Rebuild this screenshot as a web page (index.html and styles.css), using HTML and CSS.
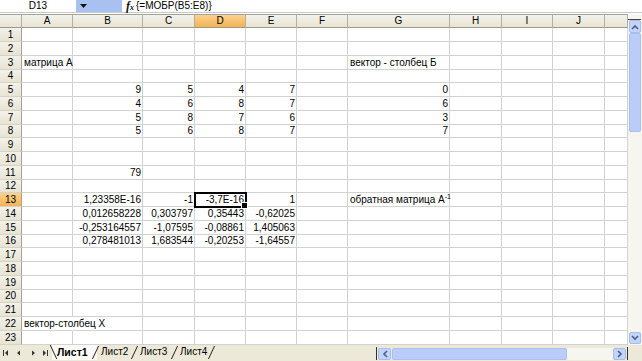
FILE: index.html
```html
<!DOCTYPE html>
<html>
<head>
<meta charset="utf-8">
<link rel="stylesheet" href="styles.css">
</head>
<body>
<div class="fbar">
  <div class="namebox">D13</div>
  <div class="namedrop"><svg width="8" height="5" viewBox="0 0 8 5"><polygon points="0,0 7,0 3.5,4" fill="#111"/></svg></div>
  <div class="fx"><i>f</i><span>x</span></div>
  <div class="formula">{=МОБР(B5:E8)}</div>
</div>
<div class="main">
  <table class="sheet">
    <colgroup>
      <col class="c-rh"><col class="c-a"><col class="c-b"><col class="c-c"><col class="c-d"><col class="c-e"><col class="c-f"><col class="c-g"><col class="c-h"><col class="c-i"><col class="c-j"><col class="c-k">
    </colgroup>
    <thead>
      <tr class="hdr"><th class="corner-cell"></th><th>A</th><th>B</th><th>C</th><th class="sel">D</th><th>E</th><th>F</th><th>G</th><th>H</th><th>I</th><th>J</th><th></th></tr>
    </thead>
    <tbody>
      <tr><th>1</th><td></td><td></td><td></td><td></td><td></td><td></td><td></td><td></td><td></td><td></td><td></td></tr>
      <tr><th>2</th><td></td><td></td><td></td><td></td><td></td><td></td><td></td><td></td><td></td><td></td><td></td></tr>
      <tr><th>3</th><td>матрица А</td><td></td><td></td><td></td><td></td><td></td><td>вектор - столбец Б</td><td></td><td></td><td></td><td></td></tr>
      <tr class="s"><th>4</th><td></td><td></td><td></td><td></td><td></td><td></td><td></td><td></td><td></td><td></td><td></td></tr>
      <tr><th>5</th><td></td><td class="n">9</td><td class="n">5</td><td class="n">4</td><td class="n">7</td><td></td><td class="n">0</td><td></td><td></td><td></td><td></td></tr>
      <tr><th>6</th><td></td><td class="n">4</td><td class="n">6</td><td class="n">8</td><td class="n">7</td><td></td><td class="n">6</td><td></td><td></td><td></td><td></td></tr>
      <tr><th>7</th><td></td><td class="n">5</td><td class="n">8</td><td class="n">7</td><td class="n">6</td><td></td><td class="n">3</td><td></td><td></td><td></td><td></td></tr>
      <tr class="s"><th>8</th><td></td><td class="n">5</td><td class="n">6</td><td class="n">8</td><td class="n">7</td><td></td><td class="n">7</td><td></td><td></td><td></td><td></td></tr>
      <tr><th>9</th><td></td><td></td><td></td><td></td><td></td><td></td><td></td><td></td><td></td><td></td><td></td></tr>
      <tr><th>10</th><td></td><td></td><td></td><td></td><td></td><td></td><td></td><td></td><td></td><td></td><td></td></tr>
      <tr><th>11</th><td></td><td class="n">79</td><td></td><td></td><td></td><td></td><td></td><td></td><td></td><td></td><td></td></tr>
      <tr class="s"><th>12</th><td></td><td></td><td></td><td></td><td></td><td></td><td></td><td></td><td></td><td></td><td></td></tr>
      <tr><th class="sel">13</th><td></td><td class="n">1,23358E-16</td><td class="n">-1</td><td class="n active">-3,7E-16</td><td class="n">1</td><td></td><td>обратная матрица А<sup>-1</sup></td><td></td><td></td><td></td><td></td></tr>
      <tr><th>14</th><td></td><td class="n">0,012658228</td><td class="n">0,303797</td><td class="n">0,35443</td><td class="n">-0,62025</td><td></td><td></td><td></td><td></td><td></td><td></td></tr>
      <tr><th>15</th><td></td><td class="n">-0,253164557</td><td class="n">-1,07595</td><td class="n">-0,08861</td><td class="n">1,405063</td><td></td><td></td><td></td><td></td><td></td><td></td></tr>
      <tr class="s"><th>16</th><td></td><td class="n">0,278481013</td><td class="n">1,683544</td><td class="n">-0,20253</td><td class="n">-1,64557</td><td></td><td></td><td></td><td></td><td></td><td></td></tr>
      <tr><th>17</th><td></td><td></td><td></td><td></td><td></td><td></td><td></td><td></td><td></td><td></td><td></td></tr>
      <tr><th>18</th><td></td><td></td><td></td><td></td><td></td><td></td><td></td><td></td><td></td><td></td><td></td></tr>
      <tr><th>19</th><td></td><td></td><td></td><td></td><td></td><td></td><td></td><td></td><td></td><td></td><td></td></tr>
      <tr class="s"><th>20</th><td></td><td></td><td></td><td></td><td></td><td></td><td></td><td></td><td></td><td></td><td></td></tr>
      <tr><th>21</th><td></td><td></td><td></td><td></td><td></td><td></td><td></td><td></td><td></td><td></td><td></td></tr>
      <tr><th>22</th><td class="ov">вектор-столбец X</td><td></td><td></td><td></td><td></td><td></td><td></td><td></td><td></td><td></td><td></td></tr>
      <tr><th>23</th><td></td><td></td><td></td><td></td><td></td><td></td><td></td><td></td><td></td><td></td><td></td></tr>
    </tbody>
  </table>
  <div class="vscroll">
    <div class="vs-top"></div>
    <div class="sbtn vs-up"><svg width="8" height="6" viewBox="0 0 8 6"><polyline points="1,5 4,2 7,5" fill="none" stroke="#4a5f8a" stroke-width="1.6"/></svg></div>
    <div class="vs-thumb"></div>
    <div class="vs-track"></div>
    <div class="sbtn vs-down"><svg width="8" height="6" viewBox="0 0 8 6"><polyline points="1,1 4,4 7,1" fill="none" stroke="#4a5f8a" stroke-width="1.6"/></svg></div>
  </div>
</div>
<div class="bottom">
  <div class="nav">
    <svg width="48" height="16" viewBox="0 0 48 16">
      <rect x="3" y="5" width="1" height="6" fill="#333"/>
      <polygon points="8,5 8,11 5,8" fill="#333"/>
      <polygon points="20,5.5 20,10.5 17,8" fill="#333"/>
      <polygon points="32,5.5 32,10.5 35,8" fill="#333"/>
      <polygon points="43,5 43,11 46,8" fill="#333"/>
      <rect x="47" y="5" width="1" height="6" fill="#333"/>
    </svg>
  </div>
  <div class="tabs">
    <div class="tab active">Лист1</div>
    <div class="tab">Лист2</div>
    <div class="tab">Лист3</div>
    <div class="tab">Лист4</div>
  </div>
  <div class="hscroll">
    <div class="sbtn hs-btn"><svg width="6" height="8" viewBox="0 0 6 8"><polyline points="5,1 2,4 5,7" fill="none" stroke="#4a5f8a" stroke-width="1.6"/></svg></div>
    <div class="hs-thumb"></div>
    <div class="hs-track"></div>
    <div class="sbtn hs-btn"><svg width="6" height="8" viewBox="0 0 6 8"><polyline points="1,1 4,4 1,7" fill="none" stroke="#4a5f8a" stroke-width="1.6"/></svg></div>
  </div>
  <div class="corner"></div>
</div>
</body>
</html>
```

FILE: styles.css
```css
* { box-sizing: border-box; }
html, body { margin: 0; padding: 0; }
body {
  width: 642px;
  height: 361px;
  overflow: hidden;
  background: #fff;
  font-family: "Liberation Sans", Arial, sans-serif;
  font-size: 10px;
  color: #000;
}

/* formula bar */
.fbar {
  display: flex;
  height: 13px;
  margin-bottom: 1px;
  border-bottom: 1px solid #c3c9d6;
  line-height: 12px;
}
.namebox {
  width: 76px;
  text-align: center;
  background: #fff;
}
.namedrop {
  width: 46px;
  background: #a9c1f1;
  display: flex;
  align-items: center;
  padding-left: 4px;
}
.fx {
  padding: 0 2px 0 4px;
  font-family: "Liberation Serif", serif;
  font-weight: bold;
  font-size: 12px;
  line-height: 12px;
  color: #111;
  white-space: nowrap;
}
.fx span { font-size: 8px; font-style: italic; }
.formula { padding-left: 0; }

/* main area */
.main {
  display: flex;
  height: 331px;
}
.sheet {
  width: 628px;
  table-layout: fixed;
  border-collapse: separate;
  border-spacing: 0;
}
.c-rh { width: 22px; }
.c-a { width: 51px; }
.c-b { width: 70px; }
.c-c { width: 52px; }
.c-d { width: 51px; }
.c-e { width: 51px; }
.c-f { width: 51px; }
.c-g { width: 102px; }
.c-h { width: 52px; }
.c-i { width: 51px; }
.c-j { width: 52px; }
.c-k { width: 23px; }

.sheet tr { height: 14px; }
.sheet tr.s { height: 13px; }
.sheet tr.hdr { height: 14px; }

.sheet th {
  font-weight: normal;
  padding: 0;
  line-height: 12px;
  text-align: center;
  background: linear-gradient(#f3f2ea, #e7e4d4);
  border-right: 1px solid #c5c2b2;
  border-bottom: 1px solid #d6d3c4;
}
.sheet thead th {
  border-top: 1px solid #a6a394;
  border-right: 1px solid #b3b0a0;
  border-bottom: 1px solid #9e9b8b;
}
.sheet tbody th {
  border-right: 1px solid #a6a394;
}
.sheet th.sel {
  background: linear-gradient(#fbd38e, #f4b154);
}
.sheet td {
  padding: 0 2px 0 2px;
  line-height: 12px;
  white-space: nowrap;
  overflow: visible;
  border-right: 1px solid #d2d2d2;
  border-bottom: 1px solid #d2d2d2;
}
.sheet td.n { text-align: right; padding-right: 1px; }
.sheet td.ov { border-right-color: transparent; }
.sheet td.active {
  position: relative;
  outline: 2px solid #000;
  outline-offset: -1px;
}
.sheet td.active::after {
  content: "";
  position: absolute;
  right: -3px;
  bottom: -3px;
  width: 5px;
  height: 5px;
  background: #000;
  border: 1px solid #fff;
}
sup { font-size: 7px; line-height: 0; vertical-align: 4px; }

/* vertical scroll */
.vscroll {
  width: 14px;
  display: flex;
  flex-direction: column;
  background: #f6f5ef;
}
.vs-top { height: 6px; border-bottom: 1px solid #444; margin-right: 1px; }
.sbtn {
  display: flex;
  align-items: center;
  justify-content: center;
  background: #c3d4fa;
  border: 1px solid #a7bdf0;
  border-radius: 2px;
}
.vs-up { height: 13px; margin: 0 1px; }
.vs-thumb {
  height: 99px;
  margin: 0 1px;
  background: #bacdf8;
  border: 1px solid #a9bff2;
  border-radius: 2px;
}
.vs-track { flex: 1; }
.vs-down { height: 12px; margin: 0 1px 1px 1px; }

/* bottom bar */
.bottom {
  display: flex;
  height: 16px;
  background: #ece9d8;
}
.nav { width: 48px; }
.tabs {
  width: 328px;
  display: flex;
  padding-left: 4px;
}
.tab {
  position: relative;
  height: 15px;
  line-height: 14px;
  padding-left: 4px;
  font-size: 10px;
}
.tab:nth-child(1) { width: 45px; padding-left: 5px; }
.tab:nth-child(2) { width: 39px; }
.tab:nth-child(3) { width: 40px; }
.tab:nth-child(4) { width: 37px; }
.tab.active {
  font-weight: bold;
  font-size: 10.5px;
  background: #fbfaf6;
}
.tab::after {
  content: "";
  position: absolute;
  right: 1px;
  top: 1px;
  height: 13px;
  border-left: 1px solid #222;
  transform: skewX(-25deg);
}
.tab.active::before {
  content: "";
  position: absolute;
  left: 1px;
  top: 0;
  height: 14px;
  border-left: 1px solid #222;
  transform: skewX(25deg);
}
.hscroll {
  width: 252px;
  display: flex;
  align-items: center;
  padding: 0 1px 0 1px;
  border-left: 1px solid #333;
  border-right: 1px solid #333;
  margin: 2px 0 1px 0;
}
.hs-btn { width: 13px; height: 12px; }
.hs-thumb {
  width: 175px;
  height: 12px;
  margin-left: 1px;
  background: #bacdf8;
  border: 1px solid #a9bff2;
  border-radius: 2px;
}
.hs-track { flex: 1; height: 12px; background: #f6f5ef; }
.corner { width: 14px; }
```
